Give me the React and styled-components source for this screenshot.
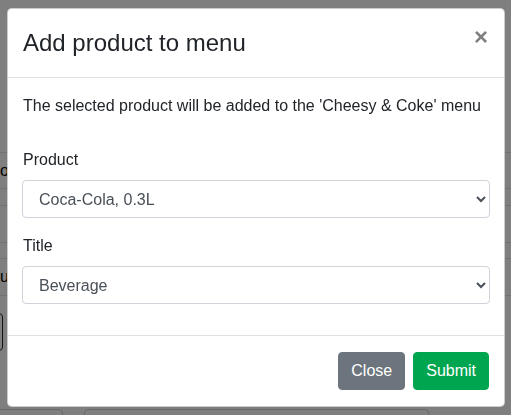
import React from "react";
import styled, { createGlobalStyle } from "styled-components";

const Global = createGlobalStyle`
  html, body { margin: 0; padding: 0; background: #fff; }
  body {
    font-family: "Liberation Sans", Arial, sans-serif;
    font-size: 16px;
    line-height: 1.5;
    color: #212529;
    overflow: hidden;
  }
  * { box-sizing: border-box; }
`;

/* ---------- page behind the modal ---------- */
const Page = styled.div`
  width: 511px;
  height: 415px;
  overflow: hidden;
  padding-top: 78px;
`;

const Heading = styled.h1`
  margin: 0 0 0 -22px;
  font-size: 40px;
  font-weight: 700;
  line-height: 44px;
  color: #000;
`;

const Table = styled.div`
  margin-top: 30px;
  border-top: 1px solid #dee2e6;
`;

const Row = styled.div`
  height: ${(p) => p.$h}px;
  border-bottom: 1px solid #dee2e6;
  display: flex;
  align-items: center;
  padding-left: ${(p) => p.$indent || 0}px;
  font-size: 16px;
  color: #000;
  white-space: nowrap;
`;

const GhostButton = styled.div`
  margin: 17px 0 0 -60px;
  width: 63px;
  height: 38px;
  border: 1px solid #212529;
  border-radius: 4px;
`;

const InputRow = styled.div`
  display: flex;
  gap: 21px;
  margin: 58px 0 0 -20px;
`;

const GhostInput = styled.div`
  width: ${(p) => p.$w}px;
  height: 38px;
  border: 1px solid #ced4da;
  border-radius: 4px;
`;

/* ---------- modal ---------- */
const Backdrop = styled.div`
  position: fixed;
  inset: 0;
  background: rgba(0, 0, 0, 0.5);
  display: flex;
  align-items: flex-start;
`;

const Dialog = styled.div`
  width: 498px;
  margin: 8px 0 0 7px;
  background: #fff;
  border: 1px solid rgba(0, 0, 0, 0.2);
  border-radius: 4.8px;
  display: flex;
  flex-direction: column;
`;

const Header = styled.div`
  display: flex;
  align-items: flex-start;
  justify-content: space-between;
  padding: 16px 16px 16px 15px;
  border-bottom: 1px solid #dee2e6;
`;

const Title = styled.h4`
  margin: 0;
  font-size: 24px;
  font-weight: 500;
  line-height: 1.5;
  color: #212529;
`;

const CloseX = styled.button`
  padding: 16px;
  margin: -16px -16px -16px auto;
  background: transparent;
  border: 0;
  font-family: inherit;
  font-size: 24px;
  font-weight: 700;
  line-height: 1;
  color: #000;
  opacity: 0.5;
  text-shadow: 0 1px 0 #fff;
  cursor: pointer;
`;

const Body = styled.div`
  padding: 16px 14px 15px;
`;

const Lead = styled.p`
  margin: 0 0 30px 1px;
`;

const Group = styled.div`
  margin-bottom: 16px;
`;

const Label = styled.label`
  display: block;
  margin: 0 0 8px 1px;
`;

const Select = styled.select`
  display: block;
  width: 100%;
  height: 38px;
  padding: 6px 12px;
  font-family: inherit;
  font-size: 16px;
  line-height: 1.5;
  color: #495057;
  background-color: #fff;
  border: 1px solid #ced4da;
  border-radius: 4px;
`;

const Footer = styled.div`
  display: flex;
  justify-content: flex-end;
  align-items: center;
  padding: 12px 11px 12px 12px;
  border-top: 1px solid #dee2e6;
`;

const Btn = styled.button`
  margin: 4px;
  padding: 6px 12px;
  font-family: inherit;
  font-size: 16px;
  line-height: 1.5;
  color: #fff;
  background: ${(p) => p.$bg};
  border: 1px solid ${(p) => p.$bg};
  border-radius: 4px;
  cursor: pointer;
`;

export default function App() {
  return (
    <>
      <Global />
      <Page>
        <Heading>6</Heading>
        <Table>
          <Row $h={36} $indent={-5}>o</Row>
          <Row $h={17} />
          <Row $h={37} />
          <Row $h={16} />
          <Row $h={37} $indent={-10}>us</Row>
        </Table>
        <GhostButton />
        <InputRow>
          <GhostInput $w={83} />
          <GhostInput $w={345} />
        </InputRow>
      </Page>
      <Backdrop>
        <Dialog role="dialog">
          <Header>
            <Title>Add product to menu</Title>
            <CloseX aria-label="Close">×</CloseX>
          </Header>
          <Body>
            <Lead>The selected product will be added to the 'Cheesy &amp; Coke' menu</Lead>
            <Group>
              <Label>Product</Label>
              <Select defaultValue="coke">
                <option value="coke">Coca-Cola, 0.3L</option>
              </Select>
            </Group>
            <Group>
              <Label>Title</Label>
              <Select defaultValue="bev">
                <option value="bev">Beverage</option>
              </Select>
            </Group>
          </Body>
          <Footer>
            <Btn $bg="#6c757d">Close</Btn>
            <Btn $bg="#00a64f">Submit</Btn>
          </Footer>
        </Dialog>
      </Backdrop>
    </>
  );
}
